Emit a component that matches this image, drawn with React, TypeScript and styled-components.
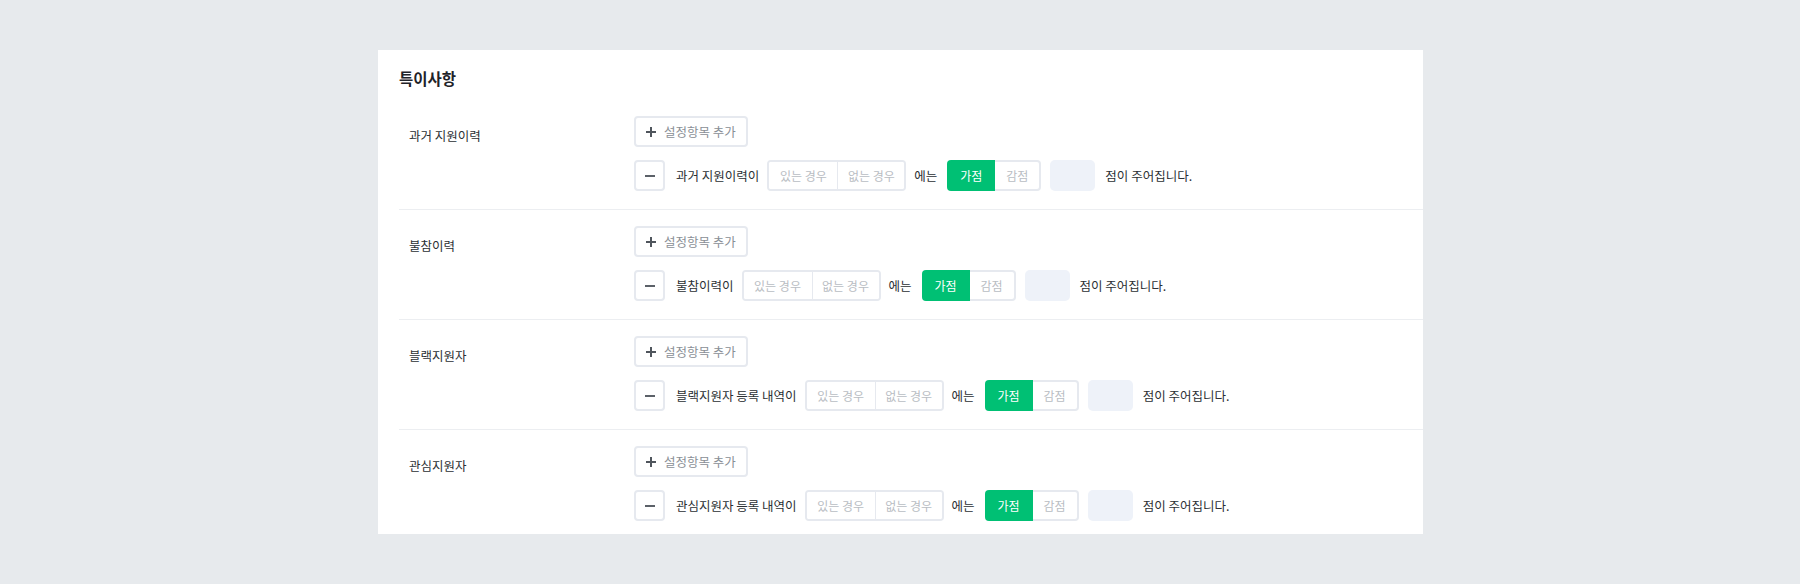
import React from "react";
import styled, { createGlobalStyle } from "styled-components";

const Global = createGlobalStyle`
  html, body {
    margin: 0;
    padding: 0;
    background: #e7eaed;
    font-family: "Noto Sans CJK KR", "Noto Sans", sans-serif;
    color: #222;
  }
  * { box-sizing: border-box; }
`;

const Page = styled.div`
  padding: 50px 0 50px 378px;
  min-height: 584px;
`;

const Card = styled.section`
  width: 1045px;
  background: #fff;
  padding: 17px 0 0 21px;
`;

const Title = styled.h2`
  margin: 0 0 11px;
  font-size: 15.5px;
  line-height: 22px;
  font-weight: 700;
  color: #1f2329;
`;

const Row = styled.div<{ $last?: boolean }>`
  display: grid;
  grid-template-columns: 235px 1fr;
  padding: 16px 0 ${(p) => (p.$last ? "13px" : "18px")};
  border-bottom: ${(p) => (p.$last ? "none" : "1px solid #eceef1")};
`;

const Label = styled.div`
  padding: 10px 0 0 10px;
  font-size: 12.5px;
  line-height: 20px;
  color: #2b2f33;
`;

const Controls = styled.div`
  display: flex;
  flex-direction: column;
  align-items: flex-start;
  gap: 13px;
`;

const AddButton = styled.button`
  display: flex;
  align-items: center;
  gap: 8px;
  height: 31px;
  width: 114px;
  padding: 0 0 0 10px;
  border: 2px solid #e6e9ef;
  border-radius: 4px;
  background: #fff;
  font-family: inherit;
  font-size: 12.5px;
  color: #8a8f96;
  cursor: pointer;
`;

const Line = styled.div`
  display: flex;
  align-items: center;
  gap: 8px;
  font-size: 12.5px;
  color: #2b2f33;
`;

const IconButton = styled.button`
  display: flex;
  align-items: center;
  justify-content: center;
  width: 31px;
  height: 31px;
  padding: 0;
  margin-right: 3px;
  border: 2px solid #e6e9ef;
  border-radius: 4px;
  background: #fff;
  cursor: pointer;
`;

const Text = styled.span<{ $mr?: number }>`
  white-space: nowrap;
  line-height: 20px;
  margin-right: ${(p) => p.$mr ?? 0}px;
`;

const Segment = styled.div<{ $mr?: number }>`
  display: flex;
  height: 31px;
  border: 2px solid #e6e9ef;
  border-radius: 4px;
  overflow: hidden;
  margin-right: ${(p) => p.$mr ?? 0}px;
`;

const SegItem = styled.div<{ $w: number }>`
  display: flex;
  align-items: center;
  justify-content: center;
  width: ${(p) => p.$w}px;
  font-size: 12px;
  color: #b9bdc3;
  background: #fff;
  & + & {
    border-left: 1px solid #e6e9ef;
  }
`;

const ToggleWrap = styled.div<{ $mr?: number }>`
  display: flex;
  height: 31px;
  margin-right: ${(p) => p.$mr ?? 0}px;
`;

const ToggleItem = styled.div<{ $active?: boolean }>`
  display: flex;
  align-items: center;
  justify-content: center;
  width: ${(p) => (p.$active ? 48 : 46)}px;
  font-size: 12px;
  color: ${(p) => (p.$active ? "#fff" : "#b9bdc3")};
  background: ${(p) => (p.$active ? "#00c074" : "#fff")};
  border: ${(p) => (p.$active ? "none" : "2px solid #e6e9ef")};
  border-left: none;
  border-radius: ${(p) => (p.$active ? "4px 0 0 4px" : "0 4px 4px 0")};
`;

const ScoreInput = styled.input`
  width: 45px;
  height: 31px;
  border: none;
  border-radius: 5px;
  background: #eef2f9;
  margin-right: 2px;
  outline: none;
`;

const Plus = () => (
  <svg width="10" height="10" viewBox="0 0 10 10">
    <path d="M5 0v10M0 5h10" stroke="#4f555c" strokeWidth="2" />
  </svg>
);

const Minus = () => (
  <svg width="10" height="10" viewBox="0 0 10 10">
    <path d="M0 5h10" stroke="#5b6168" strokeWidth="2" />
  </svg>
);

const rows = [
  { label: "과거 지원이력", cond: "과거 지원이력이" },
  { label: "불참이력", cond: "불참이력이" },
  { label: "블랙지원자", cond: "블랙지원자 등록 내역이" },
  { label: "관심지원자", cond: "관심지원자 등록 내역이" },
];

export default function App() {
  return (
    <>
      <Global />
      <Page>
        <Card>
          <Title>특이사항</Title>
          {rows.map((r, i) => (
            <Row key={r.label} $last={i === rows.length - 1}>
              <Label>{r.label}</Label>
              <Controls>
                <AddButton>
                  <Plus />
                  설정항목 추가
                </AddButton>
                <Line>
                  <IconButton aria-label="삭제">
                    <Minus />
                  </IconButton>
                  <Text>{r.cond}</Text>
                  <Segment>
                    <SegItem $w={68}>있는 경우</SegItem>
                    <SegItem $w={67}>없는 경우</SegItem>
                  </Segment>
                  <Text $mr={2}>에는</Text>
                  <ToggleWrap $mr={1}>
                    <ToggleItem $active>가점</ToggleItem>
                    <ToggleItem>감점</ToggleItem>
                  </ToggleWrap>
                  <ScoreInput />
                  <Text>점이 주어집니다.</Text>
                </Line>
              </Controls>
            </Row>
          ))}
        </Card>
      </Page>
    </>
  );
}
